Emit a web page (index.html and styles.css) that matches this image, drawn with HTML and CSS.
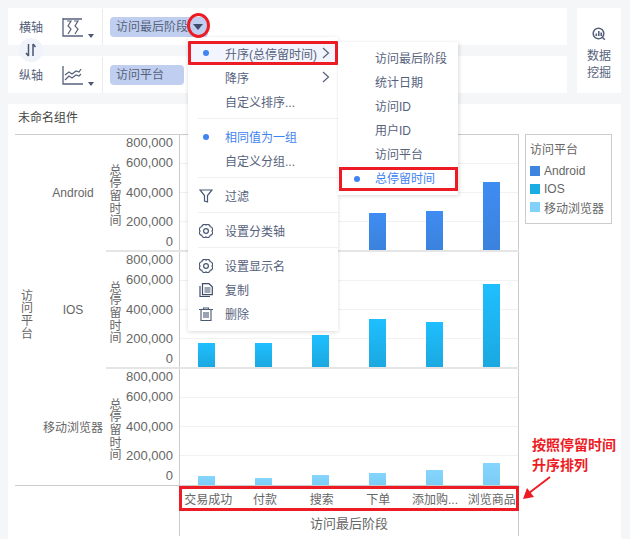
FILE: index.html
```html
<!DOCTYPE html>
<html lang="zh">
<head>
<meta charset="utf-8">
<title>未命名组件</title>
<link rel="stylesheet" href="styles.css">
</head>
<body>
<div class="page">
  <div class="top">
    <div class="shelves">
      <div class="shelf">
        <span class="axis-name">横轴</span>
        <span class="type-btn">
          <svg class="type-icon" width="21" height="19" viewBox="0 0 21 19"><path class="i-axis" d="M1 0v18h20M1 1h19"/><path class="i-line" d="M5 3h4l-3 5 3 3-3 5M12 3h4l-3 5 3 3-3 5"/></svg>
          <i class="caret"></i>
        </span>
        <span class="pill pill-first">访问最后阶段<i class="pill-caret"></i></span>
      </div>
      <div class="shelf">
        <span class="axis-name">纵轴</span>
        <span class="type-btn">
          <svg class="type-icon" width="21" height="19" viewBox="0 0 21 19"><path class="i-axis" d="M1 0v18h20"/><path class="i-line" d="M3 9l4-3 3 2 4-3 3 1 2-3M3 14l4-4 3 2 4-3 3 1 2-2"/></svg>
          <i class="caret"></i>
        </span>
        <span class="pill">访问平台</span>
      </div>
    </div>
    <div class="mining">
      <svg width="14" height="14" viewBox="0 0 14 14"><circle cx="6.5" cy="6.5" r="5.3" fill="none" stroke="#56627c" stroke-width="1.6"/><path d="M3.5 9V6.5h1.6V9zM6 9V4h1.6v5zM8.4 9V5.5H10V9z" fill="#56627c"/><path d="M10.3 10.3l2.5 2.5" stroke="#56627c" stroke-width="1.6"/></svg>
      <span class="mining-text">数据<br>挖掘</span>
    </div>
  </div>

  <div class="card">
    <div class="card-title">未命名组件</div>
    <div class="card-body">
      <div class="pivot">
        <div class="pivot-main">
          <div class="dim-title"><span class="stack">访问平台</span></div>
          <div class="rows">
            <div class="row">
              <div class="row-label">Android</div>
              <div class="row-chart">
                <div class="measure"><span class="stack">总停留时间</span></div>
                <div class="ticks"><span class="tick t8">800,000</span><span class="tick t6">600,000</span><span class="tick t4">400,000</span><span class="tick t2">200,000</span><span class="tick t0">0</span></div>
                <div class="plot">
                  <i class="grid g6"></i><i class="grid g4"></i><i class="grid g2"></i>
                  <div class="bars android">
                    <span class="cell"><i class="bar" style="height:20px"></i></span>
                    <span class="cell"><i class="bar" style="height:20px"></i></span>
                    <span class="cell"><i class="bar" style="height:28px"></i></span>
                    <span class="cell"><i class="bar" style="height:37px"></i></span>
                    <span class="cell"><i class="bar" style="height:39px"></i></span>
                    <span class="cell"><i class="bar" style="height:68px"></i></span>
                  </div>
                </div>
              </div>
            </div>
            <div class="row">
              <div class="row-label">IOS</div>
              <div class="row-chart">
                <div class="measure"><span class="stack">总停留时间</span></div>
                <div class="ticks"><span class="tick t8">800,000</span><span class="tick t6">600,000</span><span class="tick t4">400,000</span><span class="tick t2">200,000</span><span class="tick t0">0</span></div>
                <div class="plot">
                  <i class="grid g6"></i><i class="grid g4"></i><i class="grid g2"></i>
                  <div class="bars ios">
                    <span class="cell"><i class="bar" style="height:24px"></i></span>
                    <span class="cell"><i class="bar" style="height:24px"></i></span>
                    <span class="cell"><i class="bar" style="height:32px"></i></span>
                    <span class="cell"><i class="bar" style="height:48px"></i></span>
                    <span class="cell"><i class="bar" style="height:45px"></i></span>
                    <span class="cell"><i class="bar" style="height:83px"></i></span>
                  </div>
                </div>
              </div>
            </div>
            <div class="row row-last">
              <div class="row-label">移动浏览器</div>
              <div class="row-chart">
                <div class="measure"><span class="stack">总停留时间</span></div>
                <div class="ticks"><span class="tick t8">800,000</span><span class="tick t6">600,000</span><span class="tick t4">400,000</span><span class="tick t2">200,000</span><span class="tick t0">0</span></div>
                <div class="plot">
                  <i class="grid g6"></i><i class="grid g4"></i><i class="grid g2"></i>
                  <div class="bars mobile">
                    <span class="cell"><i class="bar" style="height:9px"></i></span>
                    <span class="cell"><i class="bar" style="height:7px"></i></span>
                    <span class="cell"><i class="bar" style="height:10px"></i></span>
                    <span class="cell"><i class="bar" style="height:12px"></i></span>
                    <span class="cell"><i class="bar" style="height:15px"></i></span>
                    <span class="cell"><i class="bar" style="height:22px"></i></span>
                  </div>
                </div>
              </div>
            </div>
          </div>
        </div>
        <div class="xaxis">
          <div class="xaxis-inner">
            <div class="xlabels">
              <span>交易成功</span><span>付款</span><span>搜索</span><span>下单</span><span>添加购...</span><span>浏览商品</span>
            </div>
            <div class="xtitle">访问最后阶段</div>
          </div>
        </div>
      </div>
      <div class="legend">
        <div class="legend-title">访问平台</div>
        <div class="legend-item"><i class="swatch sw-android"></i>Android</div>
        <div class="legend-item"><i class="swatch sw-ios"></i>IOS</div>
        <div class="legend-item"><i class="swatch sw-mobile"></i>移动浏览器</div>
      </div>
    </div>
  </div>
</div>

<div class="swap">
  <svg width="12" height="14" viewBox="0 0 12 14"><path d="M3.5 1v12M3.5 13L1 10M8 13V1M8 1l2.5 3" fill="none" stroke="#4a5874" stroke-width="1.5"/></svg>
</div>

<div class="menu">
  <div class="item item-hl"><i class="dot"></i><span>升序(总停留时间)</span><svg class="chev" width="8" height="12" viewBox="0 0 8 12"><path d="M1 1l5.5 5L1 11" fill="none" stroke="#56627c" stroke-width="1.2"/></svg></div>
  <div class="item"><span>降序</span><svg class="chev" width="8" height="12" viewBox="0 0 8 12"><path d="M1 1l5.5 5L1 11" fill="none" stroke="#56627c" stroke-width="1.2"/></svg></div>
  <div class="item"><span>自定义排序...</span></div>
  <div class="sep"></div>
  <div class="item item-on"><i class="dot"></i><span>相同值为一组</span></div>
  <div class="item"><span>自定义分组...</span></div>
  <div class="sep"></div>
  <div class="item"><svg class="mi" width="14" height="14" viewBox="0 0 14 14"><path d="M1 1h12L8.5 6.5V13L5.5 12V6.5z" fill="none" stroke="#4a5874" stroke-width="1.2"/></svg><span>过滤</span></div>
  <div class="sep"></div>
  <div class="item"><svg class="mi" width="14" height="14" viewBox="0 0 14 14"><path d="M13 7A2.6 2.6 0 0 1 11.24 11.24A2.6 2.6 0 0 1 7 13A2.6 2.6 0 0 1 2.76 11.24A2.6 2.6 0 0 1 1 7A2.6 2.6 0 0 1 2.76 2.76A2.6 2.6 0 0 1 7 1A2.6 2.6 0 0 1 11.24 2.76A2.6 2.6 0 0 1 13 7z" fill="none" stroke="#4a5874" stroke-width="1.2"/><circle cx="7" cy="7" r="2.4" fill="none" stroke="#4a5874" stroke-width="1.2"/></svg><span>设置分类轴</span></div>
  <div class="sep"></div>
  <div class="item"><svg class="mi" width="14" height="14" viewBox="0 0 14 14"><path d="M13 7A2.6 2.6 0 0 1 11.24 11.24A2.6 2.6 0 0 1 7 13A2.6 2.6 0 0 1 2.76 11.24A2.6 2.6 0 0 1 1 7A2.6 2.6 0 0 1 2.76 2.76A2.6 2.6 0 0 1 7 1A2.6 2.6 0 0 1 11.24 2.76A2.6 2.6 0 0 1 13 7z" fill="none" stroke="#4a5874" stroke-width="1.2"/><circle cx="7" cy="7" r="2.4" fill="none" stroke="#4a5874" stroke-width="1.2"/></svg><span>设置显示名</span></div>
  <div class="item"><svg class="mi" width="14" height="14" viewBox="0 0 14 14"><path d="M3.5 .7H10l3.3 3v8h-9.800zM1 3V13.500h10M5.500 5H11.500M5.500 7H11.500M5.500 9H11.500" fill="none" stroke="#3f4d6a" stroke-width="1.200"/></svg><span>复制</span></div>
  <div class="item"><svg class="mi" width="14" height="14" viewBox="0 0 14 14"><path d="M0 2.500h14M4.500 2.500V1h5v1.500M2 2.500V13.500h10V2.500M5 5v6M7 5v6M9 5v6" fill="none" stroke="#4a5874" stroke-width="1.100"/></svg><span>删除</span></div>
</div>

<div class="submenu">
  <div class="subitem">访问最后阶段</div>
  <div class="subitem">统计日期</div>
  <div class="subitem">访问ID</div>
  <div class="subitem">用户ID</div>
  <div class="subitem">访问平台</div>
  <div class="subitem subitem-on"><i class="dot"></i>总停留时间</div>
</div>

<div class="ring"></div>
<div class="note">按照停留时间<br>升序排列</div>
<svg class="note-arrow" width="32" height="26" viewBox="0 0 32 26"><path d="M29 1L8 17" stroke="#ed1c24" stroke-width="2" fill="none"/><path d="M2 23L6 12l7 9z" fill="#ed1c24"/></svg>
</body>
</html>
```
FILE: styles.css
```css
* { box-sizing: border-box; }
html, body { margin: 0; padding: 0; }
body {
  position: relative;
  width: 630px;
  height: 539px;
  overflow: hidden;
  background: #f5f6f8;
  font-family: "Liberation Sans", "Noto Sans CJK SC", sans-serif;
  font-size: 12px;
  color: #666;
}
i { font-style: normal; display: block; }

.page { padding: 8px 9px 0 8px; }

.top { display: flex; gap: 10px; }
.shelves { width: 559px; display: flex; flex-direction: column; gap: 11px; }
.shelf { height: 37px; background: #fff; display: flex; align-items: center; position: relative; }
.axis-name { width: 54px; padding: 3px 0 0 11px; color: #55607a; line-height: 34px; }
.type-btn { width: 41px; height: 36px; display: flex; border-right: 1px solid #e9ebef; position: relative; margin-right: 7px; }
.type-icon { margin-top: 9px; }
.caret { width: 0; height: 0; border: 3.5px solid transparent; border-top: 4px solid #4a5874; border-bottom: 0; margin: 25px 0 0 5px; }
.i-axis { fill: none; stroke: #56627c; stroke-width: 1.3; }
.i-line { fill: none; stroke: #56627c; stroke-width: 1.2; }
.pill { width: 74px; height: 20px; margin-top: 1px; background: #c0cff0; border-radius: 4px; color: #56627c; line-height: 20px; padding-left: 6px; white-space: nowrap; display: flex; align-items: center; }
.pill-first { width: 98px; margin-top: 1px; }
.pill-caret { width: 0; height: 0; border: 5px solid transparent; border-top: 6px solid #3f4d6a; border-bottom: 0; margin-left: 5px; }

.mining { width: 44px; height: 85px; background: #fff; display: flex; flex-direction: column; align-items: center; padding-top: 19px; color: #56627c; }
.mining-text { display: block; line-height: 17px; margin-top: 7px; text-align: center; }

.card { margin-top: 11px; height: 440px; background: #fff; padding: 7px 0 0 7px; }
.card-title { height: 23px; line-height: 15px; padding-left: 3px; color: #444; }
.card-body { display: flex; gap: 6px; align-items: flex-start; }

.pivot { width: 504px; border-top: 1px solid #ccc; }
.pivot-main { display: flex; border-bottom: 1px solid #ccc; }
.dim-title { width: 25px; display: flex; align-items: center; justify-content: center; padding: 8px 4px 0 0; }
.stack { writing-mode: vertical-rl; text-orientation: upright; letter-spacing: .7px; line-height: 14px; }
.rows { flex: 1; }
.row { display: flex; height: 117px; }
.row-last { height: 116px; }
.row-label { width: 66px; display: flex; align-items: center; justify-content: center; padding-bottom: 2px; white-space: nowrap; }
.row-chart { flex: 1; display: flex; border-bottom: 2px solid #e5e5e5; }
.row-last .row-chart { border-bottom: 0; }
.measure { width: 19px; display: flex; align-items: center; justify-content: center; padding: 6px 3px 0 0; }
.ticks { width: 54px; position: relative; }
.tick { position: absolute; right: 6px; font-size: 13px; line-height: 14px; white-space: nowrap; }
.t8 { top: 1px; }
.t6 { top: 21px; }
.t4 { top: 51px; }
.t2 { top: 80px; }
.t0 { top: 100px; }

.plot { width: 340px; position: relative; border-left: 1px solid #ccc; border-right: 1px solid #ccc; }
.grid { position: absolute; left: 0; right: 0; height: 1px; background: #f2f2f2; }
.g6 { top: 28px; }
.g4 { top: 57px; }
.g2 { top: 86px; }
.bars { position: absolute; left: -2px; right: -2px; bottom: 0; top: 0; display: grid; grid-template-columns: repeat(6, 1fr); }
.cell { display: flex; align-items: flex-end; justify-content: center; }
.bar { width: 17px; }
.android .bar { background: linear-gradient(#3f8cf2, #3a82dc); }
.ios .bar { background: linear-gradient(#1fbfff, #1ba8e0); }
.mobile .bar { background: linear-gradient(#85d5ff, #7ccdf6); }

.xaxis { padding-left: 164px; }
.xaxis-inner { width: 340px; height: 50px; border-left: 1px solid #ccc; border-right: 1px solid #ccc; }
.xlabels { position: relative; height: 25px; margin-right: -2px; display: grid; grid-template-columns: repeat(6, 1fr); align-items: center; text-align: center; white-space: nowrap; }
.xlabels::after { content: ""; position: absolute; left: -1px; right: 1px; top: 0; bottom: 0; border: 3px solid #ed1c24; }
.xtitle { text-align: center; font-size: 13px; line-height: 25px; }

.legend { width: 87px; height: 90px; border: 1px solid #ccc; padding: 7px 0 0 4px; }
.legend-title { line-height: 16px; margin-bottom: 4px; }
.legend-item { display: flex; align-items: center; height: 18px; white-space: nowrap; }
.swatch { width: 10px; height: 10px; margin-right: 4px; }
.sw-android { background: #3d85e0; }
.sw-ios { background: #1cace4; }
.sw-mobile { background: #82d1fa; }

.swap { position: absolute; left: 19px; top: 38px; width: 24px; height: 24px; border-radius: 50%; background: #f0f3fa; display: flex; align-items: center; justify-content: center; }

.menu { position: absolute; left: 188px; top: 37px; width: 150px; height: 294px; background: #fff; padding: 4px 0 0; box-shadow: 0 1px 4px rgba(0, 0, 0, .15); color: #56627c; }
.item { position: relative; height: 24px; display: flex; align-items: center; padding-left: 37px; white-space: nowrap; }
.item-on { color: #3f84f0; }
.item-on .dot { top: 10px; }
.item-hl { background: #f2f5fd; box-shadow: inset 0 0 0 3px #ed1c24; border-radius: 1px; }
.dot { position: absolute; left: 15px; top: 9px; width: 6px; height: 6px; border-radius: 50%; background: #3f84f0; }
.chev { position: absolute; left: 134px; top: 6px; }
.mi { position: absolute; left: 11px; top: 6px; }
.sep { height: 1px; margin: 5px 0 5px 10px; background: #eeeff2; }

.submenu { position: absolute; left: 338px; top: 42px; width: 120px; height: 153px; background: #fff; padding-top: 5px; box-shadow: 1px 1px 4px rgba(0, 0, 0, .15); color: #56627c; }
.subitem { position: relative; height: 24px; line-height: 24px; padding-left: 37px; }
.subitem-on { color: #3f84f0; box-shadow: inset 0 0 0 3px #ed1c24; margin-left: 1px; padding-left: 36px; }

.ring { position: absolute; left: 187px; top: 13px; width: 23px; height: 25px; border: 3px solid #ed1c24; border-radius: 50%; }
.note { position: absolute; left: 532px; top: 435px; color: #ed1c24; font-weight: bold; font-size: 14px; line-height: 20px; white-space: nowrap; }
.note-arrow { position: absolute; left: 521px; top: 476px; }
```
